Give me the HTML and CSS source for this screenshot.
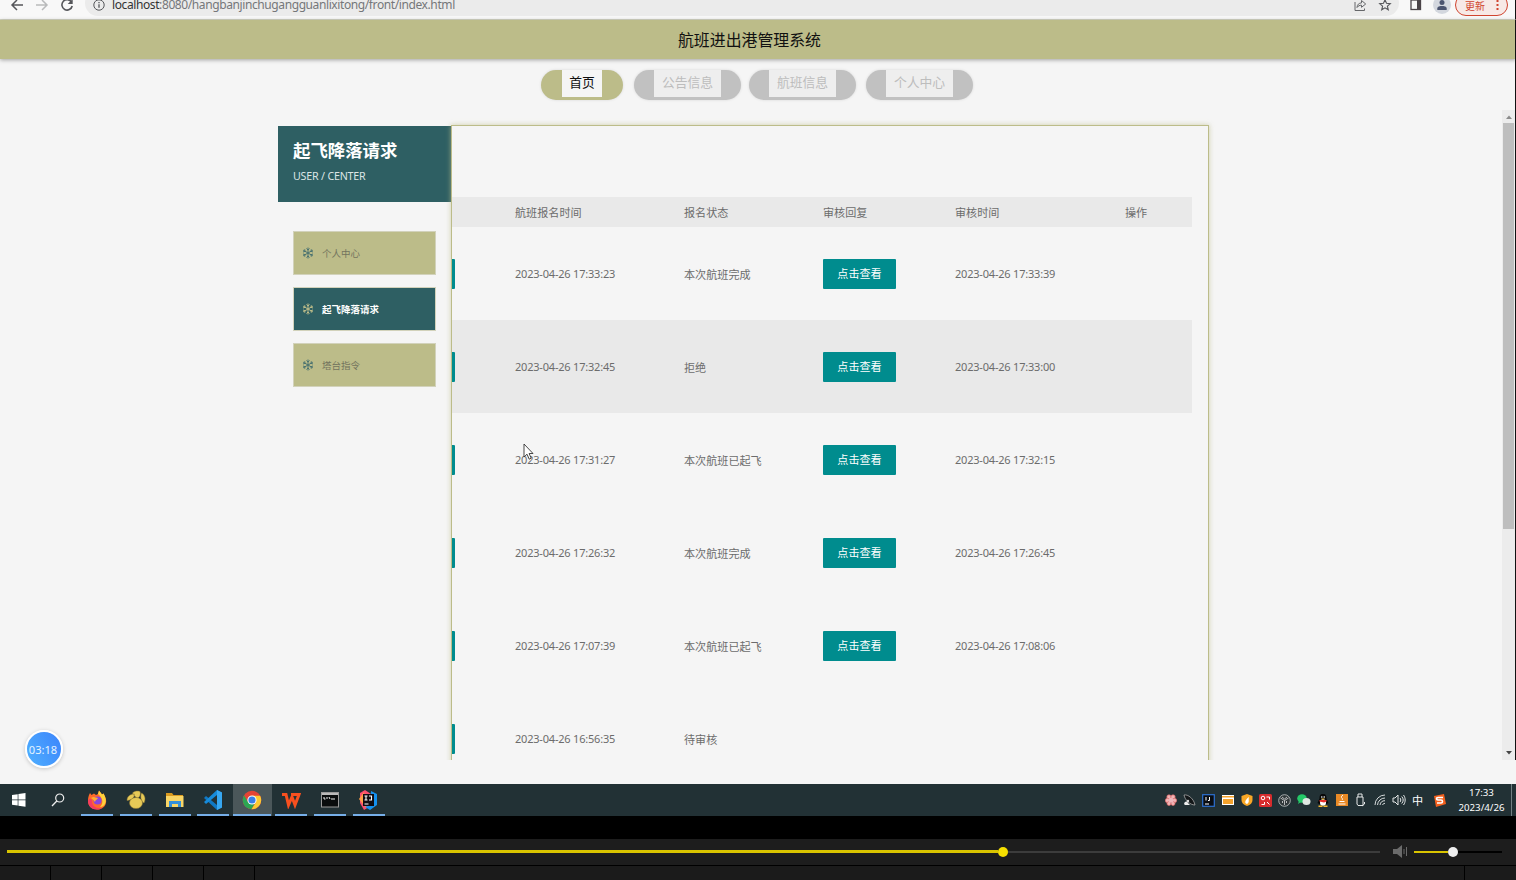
FILE: index.html
```
<!DOCTYPE html>
<html lang="zh-CN">

<head>
    <meta charset="UTF-8" />
    <title>航班进出港管理系统</title>
    <link rel="stylesheet" href="styles.css">
</head>

<body>
    <div class="screen">
        <div class="browser-bar">
            <div class="nav-icons">
                <svg width="14" height="14" viewBox="0 0 14 14"><path d="M13 7H2M7 2L2 7l5 5" fill="none" stroke="#55565a" stroke-width="1.5" /></svg>
                <svg width="14" height="14" viewBox="0 0 14 14"><path d="M1 7h11M7 2l5 5-5 5" fill="none" stroke="#b9babb" stroke-width="1.5" /></svg>
                <svg width="14" height="14" viewBox="0 0 14 14"><path d="M11.6 4.2A5.2 5.2 0 1 0 12.2 8" fill="none" stroke="#55565a" stroke-width="1.6" /><path d="M12.7 1v5H7.7z" fill="#55565a" /></svg>
            </div>
            <div class="address">
                <svg width="12" height="12" viewBox="0 0 12 12"><circle cx="6" cy="6" r="5.2" fill="none" stroke="#55565a" /><path d="M6 5.2v3.6M6 3v1.2" stroke="#55565a" stroke-width="1.3" /></svg>
                <span class="url"><b>localhost</b>:8080/hangbanjinchugangguanlixitong/front/index.html</span>
                <svg class="share" width="14" height="14" viewBox="0 0 14 14"><path d="M2 4v8.500h9.500V10.500M4 9.500C4.200 6.500 6 5 8.500 4.900V2.500L12.700 6 8.500 9.300V7.200C6.600 7.200 5.200 7.800 4 9.500z" fill="none" stroke="#66676a" /></svg>
                <svg class="star" width="14" height="14" viewBox="0 0 14 14"><path d="M7 1.800l1.500 3.500 3.800.3-2.900 2.500.9 3.700L7 9.800l-3.300 2 .9-3.700-2.900-2.500 3.800-.3z" fill="none" stroke="#55565a" stroke-width="1.100" /></svg>
            </div>
            <svg class="panel-icon" width="12" height="12" viewBox="0 0 12 12"><rect x="1" y="1" width="9.500" height="9.500" fill="none" stroke="#4a4448" stroke-width="1.300" /><path d="M7 1h4v10H7z" fill="#4a4448" /></svg>
            <svg class="avatar" width="18" height="18" viewBox="0 0 18 18"><circle cx="9" cy="9" r="9" fill="#d3d7de" /><circle cx="9" cy="6.500" r="2.500" fill="#4b5570" /><path d="M4.300 14v-1.500C4.300 10.500 7 10 9 10s4.700.5 4.700 2.500V14z" fill="#4b5570" /></svg>
            <div class="update">更新
                <svg width="3" height="12" viewBox="0 0 3 12"><path d="M.5 1h2v2h-2zM.5 5h2v2h-2zM.5 9h2v2h-2z" fill="#d0442f" /></svg>
            </div>
        </div>

        <header class="site-title">航班进出港管理系统</header>

        <nav class="menu">
            <a class="pill active"><span>首页</span></a>
            <a class="pill"><span>公告信息</span></a>
            <a class="pill"><span>航班信息</span></a>
            <a class="pill"><span>个人中心</span></a>
        </nav>

        <main class="page">
            <aside class="sidebar">
                <div class="side-head">
                    <h2>起飞降落请求</h2>
                    <p>USER / CENTER</p>
                </div>
                <ul class="side-list">
                    <li><svg width="12" height="12"><use href="#snow" /></svg>个人中心</li>
                    <li class="active"><svg width="12" height="12"><use href="#snow" /></svg>起飞降落请求</li>
                    <li><svg width="12" height="12"><use href="#snow" /></svg>塔台指令</li>
                </ul>
            </aside>

            <section class="content">
                <div class="table">
                    <div class="row head"><span></span><span>航班报名时间</span><span>报名状态</span><span>审核回复</span><span>审核时间</span><span>操作</span></div>
                    <div class="row"><i class="stub"></i><span class="time">2023-04-26 17:33:23</span><span>本次航班完成</span><span><button>点击查看</button></span><span class="time">2023-04-26 17:33:39</span></div>
                    <div class="row even"><i class="stub"></i><span class="time">2023-04-26 17:32:45</span><span>拒绝</span><span><button>点击查看</button></span><span class="time">2023-04-26 17:33:00</span></div>
                    <div class="row"><i class="stub"></i><span class="time">2023-04-26 17:31:27</span><span>本次航班已起飞</span><span><button>点击查看</button></span><span class="time">2023-04-26 17:32:15</span></div>
                    <div class="row"><i class="stub"></i><span class="time">2023-04-26 17:26:32</span><span>本次航班完成</span><span><button>点击查看</button></span><span class="time">2023-04-26 17:26:45</span></div>
                    <div class="row"><i class="stub"></i><span class="time">2023-04-26 17:07:39</span><span>本次航班已起飞</span><span><button>点击查看</button></span><span class="time">2023-04-26 17:08:06</span></div>
                    <div class="row"><i class="stub"></i><span class="time">2023-04-26 16:56:35</span><span>待审核</span></div>
                </div>
            </section>

            <div class="scrollbar">
                <svg width="6" height="4" viewBox="0 0 6 4"><path d="M0 4l3-3.500L6 4z" fill="#8b8b8b" /></svg>
                <div class="thumb"></div>
                <svg class="down" width="6" height="4" viewBox="0 0 6 4"><path d="M0 0l3 3.500L6 0z" fill="#454545" /></svg>
            </div>
        </main>

        <div class="timer">03:18</div>
        <svg class="cursor" width="11" height="18" viewBox="0 0 11 18"><path d="M1 1v13l3-2.800 2.200 5 2-1-2.100-4.700H10z" fill="#fff" stroke="#333" stroke-width=".9" /></svg>

        <footer class="taskbar">
            <div class="apps">
                <div class="app"><svg width="14" height="14" viewBox="0 0 14 14"><path d="M0 2l5.700-.8v5.300H0zM6.400 1.100L13.500 0v6.500H6.400zM0 7.200h5.700v5.300L0 11.700zM6.400 7.200h7.100v6.500l-7.100-1z" fill="#fff" /></svg></div>
                <div class="app"><svg width="14" height="14" viewBox="0 0 14 14"><circle cx="8.700" cy="5" r="4" fill="none" stroke="#eee" stroke-width="1.200" /><path d="M5.800 8L1 13" stroke="#eee" stroke-width="1.300" /></svg></div>
                <div class="app open"><svg width="20" height="20" viewBox="0 0 20 20">
                    <path d="M2 5l1-2 1.500 2L7 3.500 9 5l2-1 1-3.500 3 4 1.500-1C19 8 20 11 18.500 14.500 17 18 13.500 19.500 10 19.500 5 19.500 1 16 1 11c0-2.500.3-4 1-6z" fill="#ff6a2a" />
                    <path d="M11 4l1-3.500 3 4 1.500-1C19 8 19.500 11 18 14c-1 2-3 3-5 3 3-3 4-8-2-13z" fill="#ffd23c" />
                    <path d="M1 11c0 5 4 8.500 9 8.500 2 0 4-.5 5.500-1.500C9 19 5 16 5 11c0-3-3-3-4 0z" fill="#f63b60" />
                    <circle cx="10.500" cy="10.500" r="4" fill="#8a45dd" /><path d="M4 8c3-2 5 0 7 0-1 2-3 2-3 4-1-1-2-3-4-4z" fill="#ffae30" /></svg></div>
                <div class="app open"><svg width="20" height="20" viewBox="0 0 20 20"><g fill="#e6c957" stroke="#8c7633" stroke-width=".5"><path d="M1 10.500C1 6.500 4 4 8.500 4c0 3.500-2.500 6-7.500 6.500zM6.500 3c2-2 5-2.500 7.500-1.500 1 2.500 0 5-2 6.500-2-.5-4-2-5.500-5zM15.500 3c3.500 2 4.500 6 2.500 10-3-2-4-6-2.500-10z" /><ellipse cx="10" cy="13" rx="6.500" ry="5.500" /></g></svg></div>
                <div class="app open"><svg width="18" height="18" viewBox="0 0 18 18"><path d="M0 2h6l1.500 2H17v4H0z" fill="#d99a20" /><path d="M0 5h17.500v11H0z" fill="#f9d565" /><path d="M3 16v-6h12v6h-3v-3H6v3z" fill="#348fd8" /></svg></div>
                <div class="app open"><svg width="20" height="20" viewBox="0 0 20 20"><path d="M14 0l5 2.500v15L14 20 1 8l2-2 11 9z" fill="#1078c4" /><path d="M14 0v5L3 14l-2-2z" fill="#168bdb" /><path d="M14 0l5 2.500v15L14 20z" fill="#37a7f1" /></svg></div>
                <div class="app open current"><svg width="20" height="20" viewBox="0 0 20 20"><circle cx="10" cy="10" r="9.300" fill="#e54435" /><path d="M2 5.300a9.300 9.300 0 0 0 7.500 14l4-7.300-3.500 2-4-2z" fill="#2da653" /><path d="M9.500 19.300A9.300 9.300 0 0 0 18.100 5.700H10l4 4.300-.5 3z" fill="#fccb32" /><circle cx="10" cy="10" r="4.600" fill="#fff" /><circle cx="10" cy="10" r="3.600" fill="#397fe8" /></svg></div>
                <div class="app open"><svg width="20" height="18" viewBox="0 0 20 18"><path d="M1 3.500h4L7.500 14 11 6l3 8 4-10.500h-8" fill="none" stroke="#f8501f" stroke-width="3" /></svg></div>
                <div class="app open"><svg width="18" height="16" viewBox="0 0 18 16"><rect x=".5" y=".5" width="17" height="14.500" fill="#090c0d" stroke="#999" /><path d="M1 2h16" stroke="#bbb" stroke-width="2" /><path d="M3 5v2h1.500M6 5v2M8 5l1 2M10 7h4" stroke="#eee" fill="none" /></svg></div>
                <div class="app open"><svg width="19" height="20" viewBox="0 0 19 20"><path d="M1 3l5-3 6 4-2 13-5 3-4-7z" fill="#fa4d70" /><path d="M0 9l5-7 2 16z" fill="#ffa047" /><path d="M12 1l6 3v11l-7 5-5-3 5-2z" fill="#1490ee" /><rect x="4" y="4" width="11" height="12" fill="#100d13" /><path d="M5.500 6h3M7 6v4M5.500 10h3M10 6h2.500v4H10M5.500 14h4" fill="none" stroke="#fff" stroke-width="1.100" /></svg></div>
            </div>
            <div class="tray">
                <div><svg width="12" height="12" viewBox="0 0 12 12"><g fill="#f2b4b5" stroke="#df6969" stroke-width=".7"><circle cx="4" cy="3" r="2.200" /><circle cx="8" cy="3" r="2.200" /><circle cx="2.500" cy="6.500" r="2.200" /><circle cx="9.500" cy="6.500" r="2.200" /><circle cx="4" cy="9.500" r="2" /><circle cx="8" cy="9.500" r="2" /></g><circle cx="6" cy="6.300" r="2.500" fill="#efb8bd" /></svg></div>
                <div><svg width="13" height="13" viewBox="0 0 13 13"><path d="M1 1c4-1 10 4 11 10-5 0-10-5-11-10z" fill="#131719" stroke="#aaa" stroke-width=".8" /><path d="M1 10c1-3 3-3 4-1l2 2H2z" fill="#eee" /><circle cx="5" cy="7" r="1.200" fill="#ddd" /></svg></div>
                <div><svg width="13" height="13" viewBox="0 0 13 13"><rect x=".7" y=".7" width="11.600" height="11.600" fill="#0a0d12" stroke="#2d71d2" stroke-width="1.200" /><path d="M4 3v3.500M7.500 3v3.500H6M3 10h4" fill="none" stroke="#fff" /></svg></div>
                <div><svg width="12" height="12" viewBox="0 0 12 12"><path d="M0 1h12v10H0z" fill="#fff" /><path d="M0 2h12v1.500H0z" fill="#f4a32d" /><path d="M1 5h10v5H1z" fill="#f4a32d" /></svg></div>
                <div><svg width="12" height="12" viewBox="0 0 12 12"><path d="M6 0l5.500 2v4c0 3-2 5-5.500 6C2.500 11 .5 9 .5 6V2z" fill="#f8a726" /><path d="M6 10C3 9 4 6 8 3c-1 3 1 5-2 7z" fill="#fff" /></svg></div>
                <div><svg width="13" height="13" viewBox="0 0 13 13"><rect width="13" height="13" rx="1.500" fill="#d72c2d" /><circle cx="4" cy="4" r="1.800" fill="none" stroke="#fff" /><path d="M7.500 3h3v2.500M2.500 10.500h3V8M8 8l2.500 2.500" stroke="#fff" fill="none" /></svg></div>
                <div><svg width="13" height="13" viewBox="0 0 13 13"><circle cx="6.500" cy="6.500" r="5.800" fill="#30383a" stroke="#c8cbcb" stroke-width=".8" /><path d="M2.500 4l4 2.500 4-2.500M6.500 6.500V11M4 3l2.500 2L9 3M4.500 7v2M8.500 7v2" fill="none" stroke="#ddd" stroke-width=".8" /></svg></div>
                <div><svg width="14" height="12" viewBox="0 0 14 12"><ellipse cx="5" cy="4.500" rx="4.800" ry="4.200" fill="#25c968" /><path d="M2 7L1 10l3-2z" fill="#25c968" /><ellipse cx="9.500" cy="7.500" rx="4" ry="3.500" fill="#dfe7e2" /></svg></div>
                <div><svg width="12" height="13" viewBox="0 0 12 13"><path d="M6 0c3 0 3.500 2 3.500 4.500L11.500 9l-2 1-7 .2-2-1.200 2-4.500C2.500 2 3 0 6 0z" fill="#080808" /><ellipse cx="6" cy="8.500" rx="3" ry="3.200" fill="#fff" /><path d="M2.500 6h7v1.500L7 8.500l-4.500-1z" fill="#e62d2a" /><path d="M1.500 11.500h4V13h-4zM6.500 11.500h4V13h-4zM4 4.500h4L6 6z" fill="#f7b82f" /><circle cx="4.800" cy="3" r=".8" fill="#fff" /><circle cx="7.200" cy="3" r=".8" fill="#fff" /></svg></div>
                <div><svg width="12" height="12" viewBox="0 0 12 12"><rect width="12" height="12" fill="#e98a26" /><path d="M7 1c-4 3 1 3-1 5M3.500 7.500h5M2.500 10h7" fill="none" stroke="#fff" /></svg></div>
                <div><svg width="12" height="14" viewBox="0 0 12 14"><path d="M3 4V1h4v3M2 4h6v8.500H3L2 11zM9.500 9v2L7 13" fill="none" stroke="#e5e8e8" /></svg></div>
                <div><svg width="12" height="12" viewBox="0 0 12 12"><path d="M1 11A10 10 0 0 1 11 1M3.500 11A7.500 7.500 0 0 1 11 4M6 11a5 5 0 0 1 5-4.300M8.500 11A2.500 2.500 0 0 1 11 9.300" fill="none" stroke="#d5d9da" /></svg></div>
                <div><svg width="14" height="12" viewBox="0 0 14 12"><path d="M1 4h2l3-3v10L3 8H1zM8 4c1 1 1 3 0 4M9.700 2.500c2 2 2 5 0 7M11.500 1c2.200 3 2.200 7 0 10" fill="none" stroke="#e5e8e8" /></svg></div>
                <div>中</div>
                <div class="sogou"><svg width="13" height="13" viewBox="0 0 13 13"><path d="M1 2l10-2 2 10-10 3z" fill="#f3601d" /><path d="M10 3.500H5c-2 0-2 2.500 0 2.500h3c2 0 2 3 0 3H4" fill="none" stroke="#fff" stroke-width="1.600" /></svg></div>
            </div>
            <div class="clock">17:33<br>2023/4/26</div>
        </footer>

        <div class="player">
            <div class="seek"><div class="played"></div><div class="knob"></div></div>
            <svg class="speaker" width="15" height="13" viewBox="0 0 15 13"><path d="M0 4h4l5-4v13L4 9H0z" fill="#6b6b6b" /><path d="M11 4v5M13.500 2v9" stroke="#6b6b6b" /></svg>
            <div class="volume"><div class="level"></div><div class="knob"></div></div>
        </div>
        <div class="segments"><i></i><i></i><i></i><i></i><i></i><i class="wide"></i></div>
    </div>

    <svg class="defs" width="0" height="0">
        <symbol id="snow" viewBox="0 0 12 12"><path d="M6 .5v11M1.200 3.200l9.600 5.600M1.200 8.800l9.600-5.600M4.500 1.500L6 3l1.500-1.500M4.500 10.500L6 9l1.500 1.500M1 5l2-.7-.3-2M11 7l-2 .7.3 2M1 7l2 .7-.3 2M11 5l-2-.7.3-2" fill="none" stroke="currentColor" /></symbol>
    </svg>
</body>

</html>
```
FILE: styles.css
```
* {
    box-sizing: border-box;
}

body {
    margin: 0;
    background-color: #f5f5f5;
    font-family: "Noto Sans", "Noto Sans CJK SC", sans-serif;
    font-size: 11.1px;
    color: #6c6c6c;
}

svg {
    display: block;
    flex: none;
}

.defs {
    position: absolute;
}

.screen {
    position: relative;
    display: flex;
    flex-direction: column;
    width: 1516px;
    height: 880px;
    overflow: hidden;
}

.browser-bar {
    display: flex;
    align-items: flex-start;
    height: 20px;
    background-color: #f8f8f8;
    border-bottom: 1px solid #d5d6c5;
    border-right: 1px solid #111;
}

.nav-icons {
    display: flex;
    gap: 11px;
    width: 85px;
    padding-left: 10px;
    margin-top: -2px;
}

.address {
    display: flex;
    align-items: center;
    width: 1314px;
    height: 26px;
    margin-top: -10px;
    padding: 4px 7px 0 8px;
    background-color: #ebebeb;
    border-radius: 13px;
}

.url {
    flex: 1;
    margin-left: 7px;
    font-size: 12px;
    line-height: 16px;
    letter-spacing: -0.4px;
    color: #75777a;
}

.url b {
    font-weight: normal;
    color: #333;
}

.share {
    margin-right: 11px;
}

.panel-icon {
    margin: -1px 0 0 11px;
}

.avatar {
    margin: -4px 0 0 11px;
}

.update {
    display: flex;
    align-items: center;
    gap: 11px;
    width: 53px;
    height: 22px;
    margin: -6px 0 0 4px;
    padding-left: 9px;
    font-size: 10px;
    color: #d0442f;
    background-color: #f7e9e6;
    border: 1px solid #d0442f;
    border-radius: 11px;
}

.site-title {
    height: 39px;
    line-height: 40px;
    padding-right: 16px;
    text-align: center;
    font-size: 15.9px;
    color: #111;
    background-color: #bcbc89;
    border-right: 1px solid #111;
    box-shadow: 0 1px 4px rgba(0, 0, 0, 0.35);
}

.menu {
    display: flex;
    height: 51px;
    padding: 11px 0 0 541px;
    border-right: 1px solid #111;
}

.pill {
    display: flex;
    justify-content: center;
    width: 107px;
    height: 30px;
    margin-right: 8px;
    border-radius: 15px;
    background-color: #c1c1c1;
    color: #bdbdbd;
    box-shadow: 0 0 3px rgba(0, 0, 0, 0.12);
}

.pill span {
    height: 27px;
    padding: 0 7.5px;
    line-height: 25px;
    font-size: 12.8px;
    background-color: #eee;
}

.pill.active {
    width: 82px;
    margin-right: 11px;
    background-color: #bcbc89;
    color: #111;
}

.pill.active span {
    background-color: #f5f5f5;
}

.pill:nth-child(3) {
    margin-right: 10px;
}

.page {
    display: flex;
    height: 650px;
    padding: 15px 0 0 278px;
    overflow: hidden;
    border-right: 1px solid #111;
}

.sidebar {
    width: 173px;
    padding-top: 1px;
}

.side-head {
    height: 76px;
    padding: 11px 15px;
    background-color: #2e5f63;
    color: #fff;
}

.side-head h2 {
    margin: 0;
    font-size: 17.4px;
    line-height: 26px;
}

.side-head p {
    margin: 4px 0 0;
    font-size: 10.7px;
    line-height: 18px;
    letter-spacing: -0.2px;
    color: #dce5e5;
}

.side-list {
    display: flex;
    flex-direction: column;
    gap: 12px;
    margin: 0;
    padding: 29px 0 0 15px;
    list-style: none;
}

.side-list li {
    display: flex;
    align-items: center;
    gap: 8px;
    width: 143px;
    height: 44px;
    padding-left: 8px;
    font-size: 9.5px;
    color: #73745e;
    background-color: #bcbc89;
    border: 1px solid #d2d2bb;
}

.side-list svg {
    color: #4b7370;
}

.side-list .active {
    color: #fff;
    font-weight: bold;
    background-color: #2e5f63;
}

.side-list .active svg {
    color: #bcbc89;
}

.content {
    width: 758px;
    height: 700px;
    padding-top: 71px;
    border: 1px solid #bcbc89;
    box-shadow: 0 0 5px rgba(188, 188, 137, 0.7);
}

.table {
    width: 740px;
}

.row {
    display: grid;
    grid-template-columns: 48px 169px 139px 132px 170px 82px;
    align-items: center;
    height: 93px;
}

.row span {
    padding-left: 15px;
}

.row.head {
    height: 30px;
    background-color: #e9e9e9;
}

.row.even {
    background-color: #e9e9e9;
}

.row .time {
    font-size: 11px;
    letter-spacing: -0.2px;
}

.stub {
    width: 3px;
    height: 30px;
    background-color: #008c8e;
    border-radius: 0 1px 1px 0;
}

button {
    display: block;
    width: 73px;
    height: 30px;
    padding: 0 0 1px;
    border: none;
    border-radius: 1px;
    font: inherit;
    color: #fff;
    background-color: #008c8e;
}

.scrollbar {
    display: flex;
    flex-direction: column;
    align-items: center;
    width: 13px;
    height: 650px;
    margin: -15px 0 0 auto;
    padding: 5px 0;
    background-color: #ececec;
}

.thumb {
    width: 11px;
    height: 406px;
    margin-top: 4px;
    background-color: #bebebe;
}

.down {
    margin-top: auto;
}

.timer {
    position: absolute;
    left: 25px;
    top: 730px;
    width: 38px;
    height: 38px;
    line-height: 36px;
    text-align: center;
    text-indent: -2px;
    color: #e5f3ff;
    background: linear-gradient(60deg, #4fb0ff, #3c84fb);
    border: 2px solid #fff;
    border-radius: 50%;
    box-shadow: 0 1px 4px rgba(0, 0, 0, 0.2);
}

.cursor {
    position: absolute;
    left: 523px;
    top: 443px;
}

.taskbar {
    display: flex;
    height: 32px;
    margin-top: 24px;
    background-color: #223135;
    color: #fff;
}

.apps {
    display: flex;
    flex: none;
    width: 1161px;
}

.app {
    display: flex;
    align-items: center;
    justify-content: center;
    width: 38.8px;
    height: 32px;
}

.app.open {
    background: linear-gradient(#76aee8, #76aee8) center bottom / 32px 2px no-repeat;
}

.app.current {
    background: linear-gradient(#76aee8, #76aee8) center bottom / 38px 2px no-repeat #4b575a;
}

.tray {
    display: flex;
    flex: none;
}

.tray div {
    display: flex;
    align-items: center;
    justify-content: center;
    width: 19px;
}

.tray .sogou {
    width: 25px;
}

.clock {
    width: 60px;
    padding-top: 2px;
    text-align: center;
    font-size: 9.7px;
    line-height: 14.5px;
    border-right: 1px solid #718083;
}

/* video player controls */
.player {
    display: flex;
    align-items: center;
    height: 26px;
    margin-top: 23px;
    padding: 0 0 1px 7px;
    background-color: #1d1d1d;
    box-shadow: 0 -23px 0 #000;
}

.seek,
.volume {
    display: flex;
    align-items: center;
    height: 2px;
}

.seek {
    width: 1373px;
    background-color: #3c3c3c;
}

.played {
    width: 991px;
    height: 3px;
    background-color: #d9c400;
}

.knob {
    width: 10px;
    height: 10px;
    border-radius: 50%;
    background-color: #f5df00;
}

.speaker {
    margin: 0 6px 0 13px;
}

.volume {
    width: 88px;
    background-color: #000;
}

.level {
    width: 34px;
    height: 2px;
    background-color: #d9c400;
}

.volume .knob {
    background-color: #eee;
}

.segments {
    display: flex;
    flex: 1;
    border-top: 1px solid #000;
    background-color: #1b1b1b;
}

.segments i {
    width: 51px;
    border-right: 1px solid #000;
}

.segments .wide {
    width: 1210px;
}
```
